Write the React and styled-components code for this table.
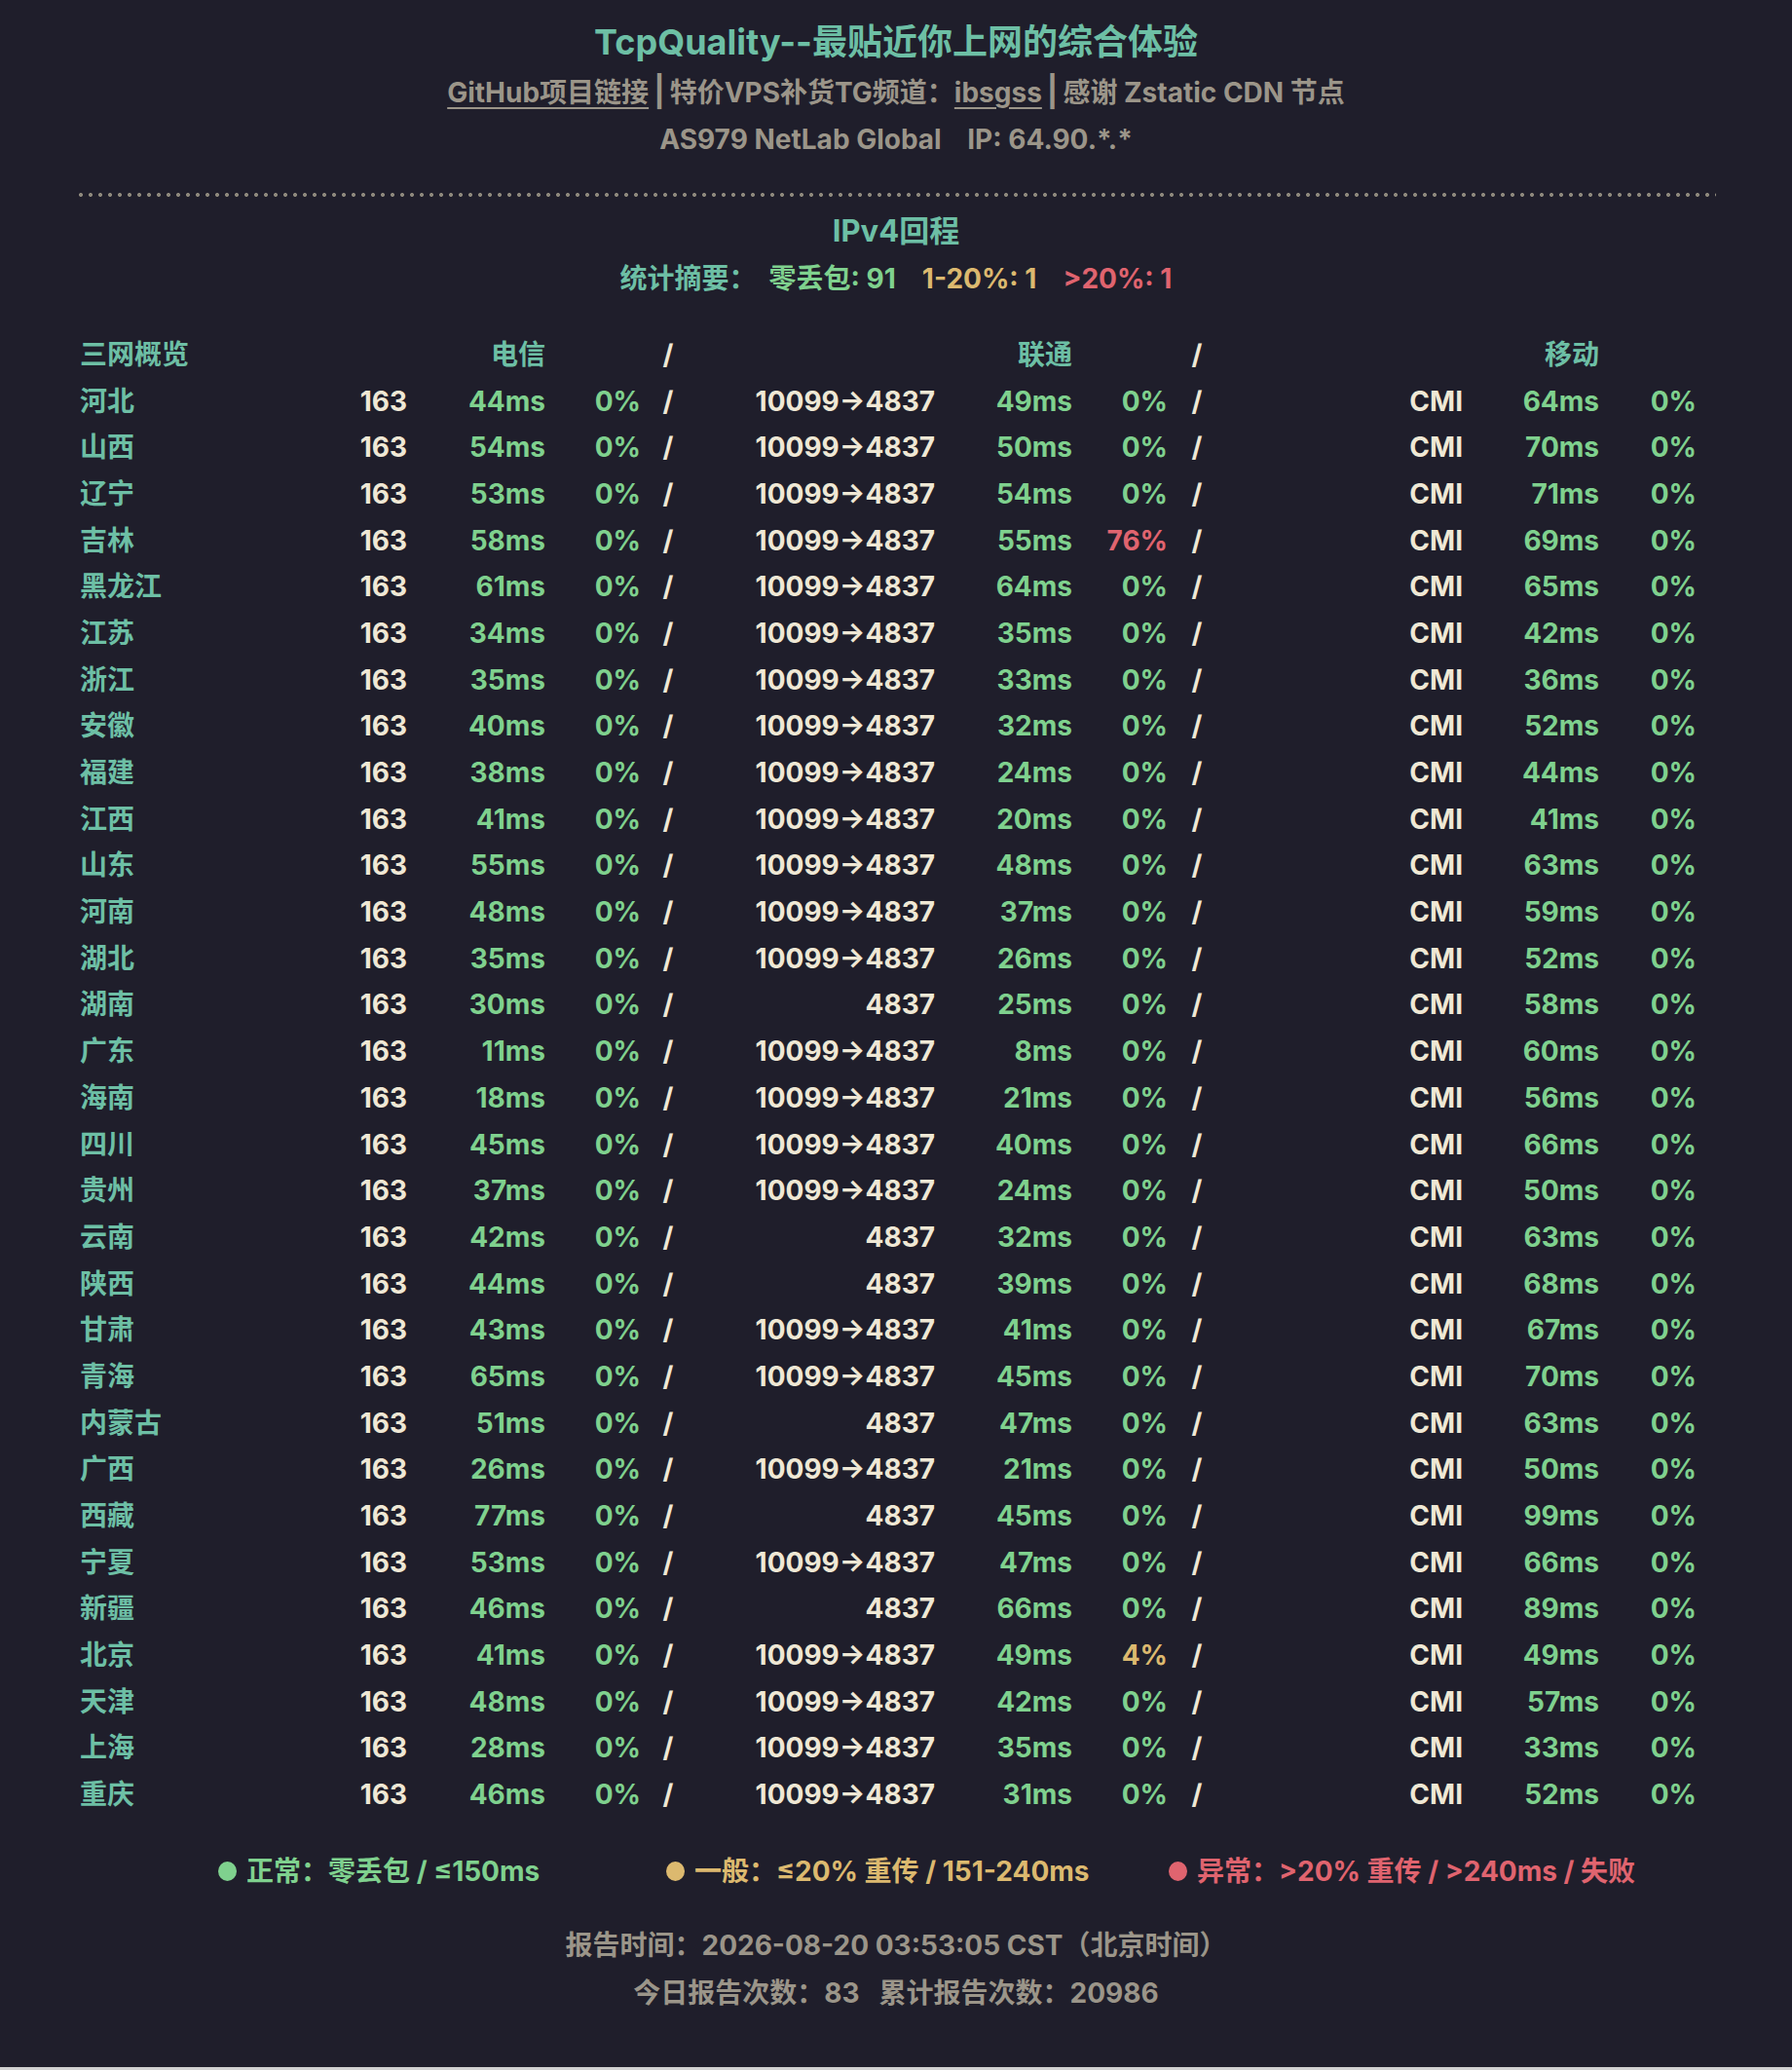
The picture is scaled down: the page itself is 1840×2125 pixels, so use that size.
import React from "react";
import styled, { createGlobalStyle } from "styled-components";

const C = {
  bg: "#1f1e2b",
  teal: "#6dbfa5",
  gray: "#9b9589",
  cream: "#efe8d5",
  green: "#7fd18e",
  yellow: "#dcb96f",
  red: "#e0646f",
  dots: "#8d887c",
};

const Global = createGlobalStyle`
  html { background: #d2d2d2; }
  body { margin: 0; }
  * { box-sizing: border-box; }
`;

const Page = styled.div`
  background: ${C.bg};
  height: 2122px;
  padding: 18px 78px 0;
  font-family: Inter, "Noto Sans CJK SC", "Noto Sans", sans-serif;
  font-weight: 700;
  font-size: 28px;
  color: ${C.cream};
`;

const Title = styled.h1`
  margin: 0;
  font-size: 36px;
  line-height: 50px;
  font-weight: 700;
  text-align: center;
  color: ${C.teal};
`;

const SubLine = styled.div`
  margin-top: ${(p) => p.$mt}px;
  line-height: 40px;
  text-align: center;
  color: ${C.gray};
`;

const Link = styled.a`
  color: ${C.gray};
  text-decoration: underline;
  text-underline-offset: 5px;
  text-decoration-thickness: 2px;
`;

const Sep = styled.span`
  display: inline-block;
  margin: 0 5px;
  font-size: 31px;
  font-weight: 700;
  color: ${C.gray};
`;

const Divider = styled.div`
  margin-top: 35px;
  height: 4px;
  background-image: radial-gradient(circle at center, ${C.dots} 1.7px, transparent 2.3px);
  background-size: 10px 4px;
  background-repeat: repeat-x;
`;

const Section = styled.h2`
  margin: 13px 0 0;
  font-size: 31px;
  line-height: 44px;
  font-weight: 700;
  text-align: center;
  color: ${C.teal};
`;

const Summary = styled.div`
  margin-top: 7px;
  line-height: 40px;
  display: flex;
  justify-content: center;
  gap: 27px;
`;

const SummaryLabel = styled.span`
  color: ${C.teal};
  margin-right: -14px;
`;

const Tone = styled.span`
  color: ${(p) => C[p.$tone]};
`;

const Table = styled.div`
  margin: 34px 0 0 4px;
  display: grid;
  grid-template-columns: 218px 118px 142px 98px 56px 246px 141px 98px 60px 243px 140px 100px;
  grid-auto-rows: 47.7px;
  align-items: center;
`;

const Cell = styled.div`
  text-align: ${(p) => p.$align || "right"};
  color: ${(p) => C[p.$tone || "cream"]};
  white-space: nowrap;
  line-height: 40px;
`;

const Legend = styled.div`
  margin-top: 35px;
  padding-left: 146px;
  display: grid;
  grid-template-columns: 460px 516px auto;
  line-height: 40px;
`;

const LegendItem = styled.div`
  display: flex;
  align-items: center;
  color: ${(p) => C[p.$tone]};
  white-space: nowrap;
`;

const Dot = styled.span`
  width: 19px;
  height: 20px;
  border-radius: 50%;
  background: ${(p) => C[p.$tone]};
  margin-right: 10px;
  flex: none;
`;

const Footer = styled.div`
  margin-top: 32px;
  text-align: center;
  color: ${C.gray};
  line-height: 49px;
`;

const rows = [
  ["河北", "44ms", "10099→4837", "49ms", "0%", "64ms"],
  ["山西", "54ms", "10099→4837", "50ms", "0%", "70ms"],
  ["辽宁", "53ms", "10099→4837", "54ms", "0%", "71ms"],
  ["吉林", "58ms", "10099→4837", "55ms", "76%", "69ms"],
  ["黑龙江", "61ms", "10099→4837", "64ms", "0%", "65ms"],
  ["江苏", "34ms", "10099→4837", "35ms", "0%", "42ms"],
  ["浙江", "35ms", "10099→4837", "33ms", "0%", "36ms"],
  ["安徽", "40ms", "10099→4837", "32ms", "0%", "52ms"],
  ["福建", "38ms", "10099→4837", "24ms", "0%", "44ms"],
  ["江西", "41ms", "10099→4837", "20ms", "0%", "41ms"],
  ["山东", "55ms", "10099→4837", "48ms", "0%", "63ms"],
  ["河南", "48ms", "10099→4837", "37ms", "0%", "59ms"],
  ["湖北", "35ms", "10099→4837", "26ms", "0%", "52ms"],
  ["湖南", "30ms", "4837", "25ms", "0%", "58ms"],
  ["广东", "11ms", "10099→4837", "8ms", "0%", "60ms"],
  ["海南", "18ms", "10099→4837", "21ms", "0%", "56ms"],
  ["四川", "45ms", "10099→4837", "40ms", "0%", "66ms"],
  ["贵州", "37ms", "10099→4837", "24ms", "0%", "50ms"],
  ["云南", "42ms", "4837", "32ms", "0%", "63ms"],
  ["陕西", "44ms", "4837", "39ms", "0%", "68ms"],
  ["甘肃", "43ms", "10099→4837", "41ms", "0%", "67ms"],
  ["青海", "65ms", "10099→4837", "45ms", "0%", "70ms"],
  ["内蒙古", "51ms", "4837", "47ms", "0%", "63ms"],
  ["广西", "26ms", "10099→4837", "21ms", "0%", "50ms"],
  ["西藏", "77ms", "4837", "45ms", "0%", "99ms"],
  ["宁夏", "53ms", "10099→4837", "47ms", "0%", "66ms"],
  ["新疆", "46ms", "4837", "66ms", "0%", "89ms"],
  ["北京", "41ms", "10099→4837", "49ms", "4%", "49ms"],
  ["天津", "48ms", "10099→4837", "42ms", "0%", "57ms"],
  ["上海", "28ms", "10099→4837", "35ms", "0%", "33ms"],
  ["重庆", "46ms", "10099→4837", "31ms", "0%", "52ms"],
];

const lossTone = (v) => {
  const n = parseInt(v, 10);
  if (n === 0) return "green";
  if (n <= 20) return "yellow";
  return "red";
};

export default function App() {
  return (
    <Page>
      <Global />
      <Title>TcpQuality--最贴近你上网的综合体验</Title>
      <SubLine $mt={6}>
        <Link href="#">GitHub项目链接</Link>
        <Sep>|</Sep>
        特价VPS补货TG频道：<Link href="#">ibsgss</Link>
        <Sep>|</Sep>
        感谢 Zstatic CDN 节点
      </SubLine>
      <SubLine $mt={8}>AS979 NetLab Global&nbsp;&nbsp;&nbsp; IP: 64.90.*.*</SubLine>
      <Divider />
      <Section>IPv4回程</Section>
      <Summary>
        <SummaryLabel>统计摘要：</SummaryLabel>
        <Tone $tone="green">零丢包: 91</Tone>
        <Tone $tone="yellow">1-20%: 1</Tone>
        <Tone $tone="red">&gt;20%: 1</Tone>
      </Summary>
      <Table>
        <Cell $align="left" $tone="teal">三网概览</Cell>
        <Cell />
        <Cell $tone="teal">电信</Cell>
        <Cell />
        <Cell $align="center">/</Cell>
        <Cell />
        <Cell $tone="teal">联通</Cell>
        <Cell />
        <Cell $align="center">/</Cell>
        <Cell />
        <Cell $tone="teal">移动</Cell>
        <Cell />
        {rows.map(([name, ms1, asn2, ms2, loss2, ms3]) => (
          <React.Fragment key={name}>
            <Cell $align="left" $tone="teal">{name}</Cell>
            <Cell>163</Cell>
            <Cell $tone="green">{ms1}</Cell>
            <Cell $tone="green">0%</Cell>
            <Cell $align="center">/</Cell>
            <Cell>{asn2}</Cell>
            <Cell $tone="green">{ms2}</Cell>
            <Cell $tone={lossTone(loss2)}>{loss2}</Cell>
            <Cell $align="center">/</Cell>
            <Cell>CMI</Cell>
            <Cell $tone="green">{ms3}</Cell>
            <Cell $tone="green">0%</Cell>
          </React.Fragment>
        ))}
      </Table>
      <Legend>
        <LegendItem $tone="green"><Dot $tone="green" />正常：零丢包 / ≤150ms</LegendItem>
        <LegendItem $tone="yellow"><Dot $tone="yellow" />一般：≤20% 重传 / 151-240ms</LegendItem>
        <LegendItem $tone="red"><Dot $tone="red" />异常：&gt;20% 重传 / &gt;240ms / 失败</LegendItem>
      </Legend>
      <Footer>
        <div>报告时间：2026-08-20 03:53:05 CST（北京时间）</div>
        <div>今日报告次数：83&nbsp;&nbsp; 累计报告次数：20986</div>
      </Footer>
    </Page>
  );
}
